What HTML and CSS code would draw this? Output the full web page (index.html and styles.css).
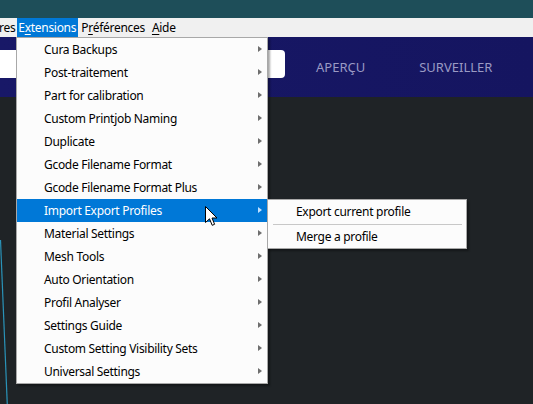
FILE: index.html
```html
<!DOCTYPE html>
<html>
<head>
<meta charset="utf-8">
<link rel="stylesheet" href="styles.css">
</head>
<body>
<div class="titlebar"></div>
<div class="menubar">
  <span class="mb-item cut">res</span>
  <span class="mb-item active">E<u>x</u>tensions</span>
  <span class="mb-item">P<u>r</u>éférences</span>
  <span class="mb-item"><u>A</u>ide</span>
</div>
<div class="app">
  <div class="header">
    <div class="search"></div>
    <span class="tab tab-preview">APERÇU</span>
    <span class="tab">SURVEILLER</span>
  </div>
  <div class="stage">
    <svg class="edge" width="12" height="170" viewBox="0 0 12 170"><line x1="0.5" y1="0" x2="7.5" y2="170" stroke="#2a92b8" stroke-width="1.2"/></svg>
  </div>
</div>

<div class="menu">
  <div class="mi">Cura Backups<i class="arr"></i></div>
  <div class="mi">Post-traitement<i class="arr"></i></div>
  <div class="mi">Part for calibration<i class="arr"></i></div>
  <div class="mi">Custom Printjob Naming<i class="arr"></i></div>
  <div class="mi">Duplicate<i class="arr"></i></div>
  <div class="mi">Gcode Filename Format<i class="arr"></i></div>
  <div class="mi">Gcode Filename Format Plus<i class="arr"></i></div>
  <div class="mi hl">Import Export Profiles<i class="arr"></i></div>
  <div class="mi">Material Settings<i class="arr"></i></div>
  <div class="mi">Mesh Tools<i class="arr"></i></div>
  <div class="mi">Auto Orientation<i class="arr"></i></div>
  <div class="mi">Profil Analyser<i class="arr"></i></div>
  <div class="mi">Settings Guide<i class="arr"></i></div>
  <div class="mi">Custom Setting Visibility Sets<i class="arr"></i></div>
  <div class="mi">Universal Settings<i class="arr"></i></div>
</div>

<div class="submenu">
  <div class="si">Export current profile</div>
  <div class="sep"></div>
  <div class="si">Merge a profile</div>
</div>

<svg class="cursor" width="13" height="21" viewBox="0 0 13 21">
  <path d="M0.5 0.5 L0.5 16.5 L4.5 12.8 L7.2 19.3 L9.6 18.3 L7 12 L12 12 Z" fill="#fff" stroke="#000" stroke-width="1" stroke-linejoin="miter"/>
</svg>
</body>
</html>
```
FILE: styles.css
```css
html, body {
  margin: 0;
  padding: 0;
}
body {
  width: 533px;
  height: 404px;
  overflow: hidden;
  background: #1f2326;
  font-family: "Noto Sans", "Open Sans", sans-serif;
  position: relative;
}
.titlebar {
  height: 18px;
  background: #1e4e59;
}
.menubar {
  height: 19px;
  background: #f0f0f0;
  display: flex;
  align-items: stretch;
  font-size: 12px;
  letter-spacing: -0.3px;
  color: #000;
}
.mb-item {
  display: flex;
  align-items: center;
  padding: 0 3px;
  margin-right: 1px;
  line-height: 19px;
}
.mb-item u {
  text-decoration-thickness: 1px;
  text-underline-offset: 2px;
}
.mb-item.cut {
  margin-left: -4px;
  padding-right: 1px;
}
.mb-item.active {
  background: #0078d7;
  color: #fff;
  padding: 0 2px 0 1px;
  margin-right: 0;
}
.app {
  height: 367px;
  display: flex;
  flex-direction: column;
}
.header {
  height: 60px;
  background: linear-gradient(90deg, #181867 0%, #151560 100%);
  display: flex;
  align-items: center;
}
.search {
  width: 285px;
  height: 28px;
  margin-top: -6px;
  background: #fff;
  border-radius: 0 4px 4px 0;
  flex: none;
}
.tab {
  color: #9a9ac4;
  font-size: 13px;
  margin-left: 54px;
}
.tab.tab-preview {
  margin-left: 31px;
}
.stage {
  flex: 1;
  background: #1f2326;
  position: relative;
}
.edge {
  position: absolute;
  left: 0;
  top: 143px;
}
.menu {
  position: absolute;
  left: 16px;
  top: 37px;
  width: 250px;
  background: #fcfcfc;
  border: 1px solid #a8a8a8;
  box-shadow: 2px 2px 2px rgba(0,0,0,0.35);
  font-size: 12px;
  letter-spacing: -0.3px;
  color: #000;
}
.mi {
  height: 23px;
  line-height: 23px;
  padding-left: 27px;
  position: relative;
}
.mi.hl {
  background: #0078d7;
  color: #fff;
}
.arr {
  position: absolute;
  right: 5px;
  top: 8px;
  width: 0;
  height: 0;
  border-top: 3.5px solid transparent;
  border-bottom: 3.5px solid transparent;
  border-left: 4px solid #6e6e6e;
}
.mi.hl .arr {
  border-left-color: #bfe0ff;
}
.submenu {
  position: absolute;
  left: 267px;
  top: 199px;
  width: 198px;
  padding-top: 1px;
  background: #fcfcfc;
  border: 1px solid #a8a8a8;
  box-shadow: 2px 2px 2px rgba(0,0,0,0.35);
  font-size: 12px;
  letter-spacing: -0.3px;
  color: #000;
}
.si {
  height: 22px;
  line-height: 22px;
  padding-left: 28px;
}
.sep {
  height: 1px;
  margin: 1px 4px 1px 5px;
  background: #c8c8c8;
}
.cursor {
  position: absolute;
  left: 205px;
  top: 206px;
}
```
